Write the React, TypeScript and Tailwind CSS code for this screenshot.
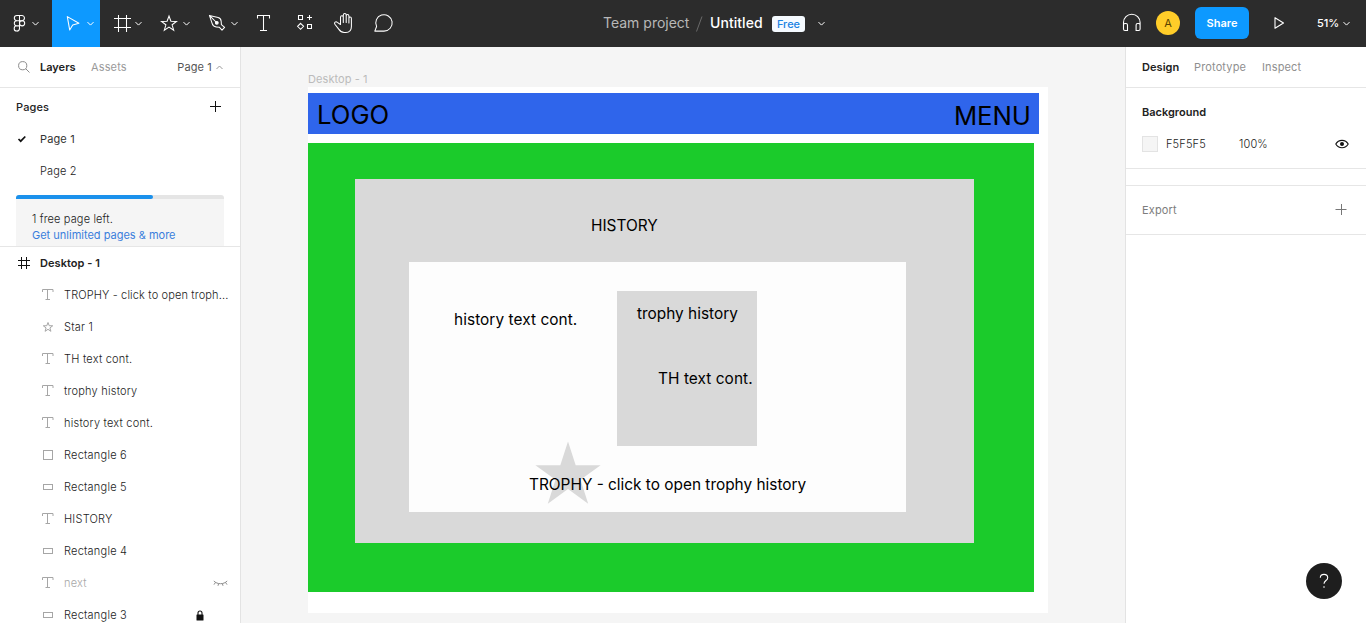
import React from "react";

const FONT = "font-['Inter','Liberation_Sans',sans-serif]";

function Chevron({ className = "" }: { className?: string }) {
  return (
    <svg width="7" height="5" viewBox="0 0 7 5" fill="none" stroke="currentColor" className={className}>
      <path d="M.5 1.100l3 3 3-3" />
    </svg>
  );
}

function Tool({
  children,
  className = "w-12",
  chevron = "",
}: {
  children: React.ReactNode;
  className?: string;
  chevron?: string;
}) {
  return (
    <button className={`flex h-full shrink-0 items-center ${className}`}>
      <svg width="30" height="47" viewBox="0 0 30 47" fill="none" stroke="currentColor" strokeWidth="1.05" className="shrink-0 overflow-visible">
        {children}
      </svg>
      {chevron && <Chevron className={`shrink-0 ${chevron}`} />}
    </button>
  );
}

function Toolbar() {
  return (
    <header className="flex h-[47px] shrink-0 items-center bg-[#2c2c2c] text-white">
      <div className="flex h-full w-[602px] shrink-0">
        <Tool className="w-[52px]" chevron="ml-[2px]">
          <path d="M19.5 15.5v13a2.65 2.65 0 1 1-2.6-2.7h2.6M19.5 15.5h-2.6a2.6 2.6 0 0 0 0 5.2h5a2.6 2.6 0 0 0 0-5.2zM19.5 20.7h-2.6a2.6 2.6 0 0 0 0 5.2h2.6" />
          <circle cx="22.1" cy="23.3" r="2.6" />
        </Tool>
        <Tool className="w-12 bg-[#0d99ff]" chevron="ml-[5px]">
          <path d="M15.3 16.6l11.6 6.6-6.2 1.9-3 4.9z" strokeLinejoin="round" />
        </Tool>
        <Tool chevron="ml-[5px]">
          <path d="M18.5 15v17M26.5 15v17M14 18.5h17M14 27.5h17" />
        </Tool>
        <Tool chevron="ml-[5px]">
          <path d="M21 16l1.9 5.2 5.6.2-4.4 3.4 1.6 5.4-4.7-3.1-4.7 3.1 1.6-5.4-4.4-3.4 5.6-.2z" />
        </Tool>
        <Tool chevron="ml-[5px]">
          <path d="M13.4 15.4l8.7 2.1c2 .5 3 2 3.1 4l.2 3.1 3.2 2.8-2.6 2.7-2.8-2.9-3-.3c-2-.2-3.5-1.3-4-3.2zM13.4 15.4l6.6 6.6" strokeLinejoin="round" />
          <circle cx="20.8" cy="22.8" r="1.4" fill="currentColor" />
        </Tool>
        <Tool className="w-10">
          <path d="M13.5 18.5v-3h12v3M19.5 15.5v15M16 30.5h7" />
        </Tool>
        <Tool className="w-10">
          <path d="M14.5 15.5h4v4h-4zM23.5 24.5h4v4h-4zM25.5 15v5M23 17.5h5M16.6 23.3l3 3-3 3-3-3z" />
        </Tool>
        <Tool className="w-10">
          <path d="M16.5 24.5v-7.3c0-2 2.8-2 2.8 0v5.3-7.300c0-2.200 2.900-2.200 2.900 0v7.300-6.600c0-2 2.700-2 2.700 0v7-4.500c0-2 2.500-2 2.500 0v8c0 3.800-2.400 6-5.600 6h-1.600c-2.500 0-4-1-5.300-3l-4-5.200c-1.200-1.700.9-3.200 2.400-1.800z" strokeLinejoin="round" />
        </Tool>
        <Tool className="w-10">
          <path d="M10.800 31.100h9.200a8.200 8.200 0 1 0-7.400-4.600z" strokeLinejoin="round" />
        </Tool>
      </div>

      <div className="flex flex-1 items-center text-[14px] leading-4">
        <span className="mb-px w-[87px] whitespace-nowrap pl-px text-[#b8b8b8]">Team project</span>
        <svg width="8" height="18" viewBox="0 0 8 18" stroke="#6a6a6a" className="ml-[6px]">
          <path d="M7 1.500L1.500 16.500" />
        </svg>
        <span className="mb-px ml-[7px] w-[54px] whitespace-nowrap font-medium tracking-[0.05px]">Untitled</span>
        <span className="ml-2 flex h-4 w-[33px] items-center justify-center rounded-[3px] bg-[#f5faff] text-[11px] font-medium text-[#1a82e2]">
          Free
        </span>
        <Chevron className="ml-[13px]" />
      </div>

      <div className="flex h-full w-[246px] shrink-0 items-center">
        <svg width="24" height="47" viewBox="0 0 24 47" fill="none" stroke="currentColor" strokeWidth="1.100">
          <path d="M3.500 26v-3.500a8.300 8.300 0 0 1 16.600 0V26M3.500 25a1.500 1.500 0 0 1 1.500-1.500h1a1.500 1.500 0 0 1 1.500 1.500v5.500H5A1.500 1.500 0 0 1 3.500 29zM20.100 25a1.500 1.500 0 0 0-1.500-1.500h-1a1.500 1.500 0 0 0-1.500 1.500v5.500h2.500a1.500 1.500 0 0 0 1.500-1.500z" />
        </svg>
        <span className="mb-px ml-3 flex size-6 items-center justify-center rounded-full bg-[#ffcd29] text-[11px] text-[#5a4300]">
          A
        </span>
        <button className="mb-px ml-[15px] flex h-8 w-[54px] items-center justify-center rounded-[6px] bg-[#0d99ff] text-[11px] font-semibold">
          Share
        </button>
        <svg width="12" height="14" viewBox="0 0 12 14" fill="none" stroke="currentColor" strokeWidth="1.100" className="mb-px ml-[25px]">
          <path d="M1 1.700v10.600l8.500-5.300z" strokeLinejoin="round" />
        </svg>
        <span className="ml-[31px] w-[21px] whitespace-nowrap text-[11px] font-medium">51%</span>
        <Chevron className="ml-[5px]" />
      </div>
    </header>
  );
}

function TextIcon() {
  return (
    <svg width="12" height="12" viewBox="0 0 12 12" fill="none" stroke="#a6a6a6">
      <path d="M.5 3V.5h10.500V3M5.500 .5v10M3.500 10.500h4.500" />
    </svg>
  );
}

function StarIcon() {
  return (
    <svg width="12" height="12" viewBox="0 0 12 12" fill="none" stroke="#a6a6a6">
      <path d="M6 1.500l1.200 3.200 3.500.1-2.800 2.100 1 3.400L6 8.300l-2.900 2 1-3.400-2.800-2.100 3.500-.1z" />
    </svg>
  );
}

function RectIcon({ tall = false }: { tall?: boolean }) {
  return (
    <svg width="12" height="12" viewBox="0 0 12 12" fill="none" stroke="#a6a6a6">
      {tall ? <rect x="1.500" y="1.500" width="9" height="9" /> : <rect x="1.500" y="3.500" width="9" height="5" />}
    </svg>
  );
}

type Layer = { name: string; kind: "text" | "star" | "rect" | "square"; state?: "hidden" | "locked" };

const layers: Layer[] = [
  { name: "TROPHY - click to open troph...", kind: "text" },
  { name: "Star 1", kind: "star" },
  { name: "TH text cont.", kind: "text" },
  { name: "trophy history", kind: "text" },
  { name: "history text cont.", kind: "text" },
  { name: "Rectangle 6", kind: "square" },
  { name: "Rectangle 5", kind: "rect" },
  { name: "HISTORY", kind: "text" },
  { name: "Rectangle 4", kind: "rect" },
  { name: "next", kind: "text", state: "hidden" },
  { name: "Rectangle 3", kind: "rect", state: "locked" },
];

function LayerRow({ name, kind, state }: Layer) {
  const tracking = name.length > 20 ? "tracking-[0.14px]" : "tracking-[0.22px]";
  return (
    <li className="flex h-8 shrink-0 items-center pl-[42px]">
      {kind === "text" && <TextIcon />}
      {kind === "star" && <StarIcon />}
      {kind === "rect" && <RectIcon />}
      {kind === "square" && <RectIcon tall />}
      <span className={`ml-[10px] whitespace-nowrap font-light ${tracking} ${state === "hidden" ? "text-[#a8a8a8]" : "text-[#1c1c1c]"}`}>
        {name}
      </span>
      {state === "hidden" && (
        <svg width="15" height="6" viewBox="0 0 15 6" fill="none" stroke="#8c8c8c" className="ml-auto mr-[12px]">
          <path d="M.8 1c3.500 3.600 9.900 3.600 13.400 0M2.600 2.300L1 4.600M5.600 3.700L5 5.800M9.400 3.700l.6 2.100M12.400 2.300L14 4.600" />
        </svg>
      )}
      {state === "locked" && (
        <svg width="8" height="11" viewBox="0 0 8 11" className="ml-auto mr-[36.5px]">
          <rect x=".5" y="4.500" width="7" height="6" rx=".5" fill="#111" />
          <path d="M2 5V3a2 2 0 0 1 4 0v2" fill="none" stroke="#111" strokeWidth="1.100" />
        </svg>
      )}
    </li>
  );
}

function LeftPanel() {
  return (
    <aside className="flex w-[241px] shrink-0 flex-col overflow-hidden border-r border-[#e3e3e3] bg-white text-[11px] leading-4 tracking-[0.14px] text-[#222]">
      <div className="flex h-[41px] shrink-0 items-center border-b border-[#e6e6e6] pl-[18px] pr-[17px]">
        <svg width="12" height="12" viewBox="0 0 12 12" fill="none" stroke="#8c8c8c">
          <circle cx="4.700" cy="4.700" r="4.100" />
          <path d="M7.700 7.700l3.800 3.800" />
        </svg>
        <span className="ml-[10px] w-[51px] whitespace-nowrap font-semibold tracking-[0px] text-[#222]">Layers</span>
        <span className="whitespace-nowrap text-[#9a9a9a]">Assets</span>
        <span className="ml-auto whitespace-nowrap text-[#555]">Page 1</span>
        <svg width="7" height="5" viewBox="0 0 7 5" fill="none" stroke="#999" className="ml-1">
          <path d="M.5 4l3-3 3 3" />
        </svg>
      </div>

      <section className="flex h-[159px] shrink-0 flex-col overflow-hidden border-b border-[#e6e6e6] pt-[3px]">
        <div className="flex h-8 shrink-0 items-center justify-between pl-4 pr-[18px]">
          <span className="font-medium">Pages</span>
          <svg width="13" height="12" viewBox="0 0 13 12" stroke="#111" fill="none">
            <path d="M1 5.500h11M6.500 0v11" />
          </svg>
        </div>
        <div className="flex h-8 shrink-0 items-center pl-[17px]">
          <svg width="10" height="8" viewBox="0 0 10 8" fill="none" stroke="#111" strokeWidth="1.700">
            <path d="M1.500 4l2.200 2.200L8.300 1.500" />
          </svg>
          <span className="ml-[13px] text-[#333]">Page 1</span>
        </div>
        <div className="flex h-8 shrink-0 items-center pl-10 font-light">Page 2</div>
        <div className="mx-4 mt-2 h-1 shrink-0 overflow-hidden rounded-t-[3px] bg-[#e5e5e5]">
          <div className="h-full w-[137px] rounded-r-[2px] bg-[#1b91ec]" />
        </div>
        <div className="mx-4 flex-1 bg-[#f5f5f5] pl-4 pt-3">
          <p className="font-light">1 free page left.</p>
          <p className="whitespace-nowrap tracking-[0px] text-[#3a7edc]">Get unlimited pages &amp; more</p>
        </div>
      </section>

      <div className="flex h-8 shrink-0 items-center pl-[18px]">
        <svg width="12" height="12" viewBox="0 0 12 12" fill="none" stroke="#111">
          <path d="M3.500 0v12M8.500 0v12M0 3.500h12M0 8.500h12" />
        </svg>
        <span className="ml-[10px] font-semibold tracking-[0.05px] text-[#222]">Desktop - 1</span>
      </div>
      <ul className="flex flex-col">
        {layers.map((layer) => (
          <LayerRow key={layer.name} {...layer} />
        ))}
      </ul>
    </aside>
  );
}

function Canvas() {
  const label = "absolute whitespace-nowrap text-[15.4px] leading-5 text-black";
  return (
    <main className="relative flex-1 overflow-hidden bg-[#f5f5f5]">
      <span className="absolute left-[67px] top-[24px] whitespace-nowrap text-[11px] leading-4 tracking-[0.08px] text-[#bbb]">
        Desktop - 1
      </span>
      <div className="absolute left-[67px] top-[40px] h-[526px] w-[740px] bg-white">
        <div className="absolute left-0 top-[6px] h-[41px] w-[731px] bg-[#2f65eb]" />
        <span className="absolute left-[9px] top-[12px] whitespace-nowrap text-[25.700px] leading-8 text-black">LOGO</span>
        <span className="absolute left-[646px] top-[13px] whitespace-nowrap text-[25.700px] leading-8 tracking-[-0.1px] text-black">MENU</span>
        <div className="absolute left-0 top-[56px] h-[449px] w-[726px] bg-[#1bcb2b]" />
        <div className="absolute left-[47px] top-[92px] h-[364px] w-[619px] bg-[#d9d9d9]" />
        <span className={`${label} left-[283px] top-[129px]`}>HISTORY</span>
        <div className="absolute left-[101px] top-[175px] h-[250px] w-[497px] bg-[#fdfdfd]" />
        <div className="absolute left-[309px] top-[204px] h-[155px] w-[140px] bg-[#d9d9d9]" />
        <span className={`${label} left-[146px] top-[223px] tracking-[0.06px]`}>history text cont.</span>
        <span className={`${label} left-[329px] top-[217px]`}>trophy history</span>
        <span className={`${label} left-[350px] top-[282px] tracking-[0.06px]`}>TH text cont.</span>
        <svg width="66" height="64" viewBox="0 0 66 64" className="absolute left-[227px] top-[354px]" fill="#d9d9d9">
          <path d="M33 .5l7.700 23.700h24.900L45.500 38.800l7.700 24L33 48.100 12.800 62.800l7.700-24L.4 24.200h24.900z" />
        </svg>
        <span className={`${label} left-[221px] top-[388px]`}>TROPHY - click to open trophy history</span>
      </div>
    </main>
  );
}

function RightPanel() {
  return (
    <aside className="flex w-[241px] shrink-0 flex-col border-l border-[#e3e3e3] bg-white text-[11px] leading-4 tracking-[0.14px] text-[#222]">
      <div className="flex h-[41px] shrink-0 items-center border-b border-[#e6e6e6] pl-4 text-[#8f8f8f]">
        <span className="w-[52px] font-semibold tracking-[0.05px] text-[#222]">Design</span>
        <span className="w-[68px]">Prototype</span>
        <span>Inspect</span>
      </div>
      <section className="flex h-[81px] shrink-0 flex-col border-b border-[#e6e6e6] py-2 pl-4 pr-[17px]">
        <div className="flex h-8 items-center font-semibold tracking-[0px]">Background</div>
        <div className="flex h-8 items-center">
          <span className="size-4 border border-[#e3e3e3] bg-[#f5f5f5]" />
          <span className="ml-2 w-[73px] font-light">F5F5F5</span>
          <span className="font-light">100%</span>
          <svg width="14" height="10" viewBox="0 0 14 10" fill="none" stroke="#111" strokeWidth="1.100" className="ml-auto">
            <path d="M.8 5C3.500 .1 10.500 .1 13.200 5 10.500 9.900 3.500 9.900 .8 5z" />
            <circle cx="7" cy="5" r="2" fill="#111" stroke="none" />
          </svg>
        </div>
      </section>
      <div className="h-4 shrink-0" />
      <section className="flex h-[50px] shrink-0 items-center justify-between border-y border-[#e6e6e6] pl-4 pr-[19px] text-[#7d7d7d]">
        <span>Export</span>
        <svg width="12" height="12" viewBox="0 0 12 12" stroke="#777" fill="none">
          <path d="M.5 5.500h11M6.500 0v11" />
        </svg>
      </section>
      <button className="mb-6 ml-auto mr-6 mt-auto flex size-9 items-center justify-center rounded-full bg-[#1e1e1e]">
        <svg width="10" height="16" viewBox="0 0 10 16" fill="none" stroke="#fff" strokeWidth="1.100">
          <path d="M1.300 4.700C1.300 .2 8.700 .2 8.700 4.700 8.700 7.600 5 7.500 5 10.800" />
          <circle cx="5" cy="14" r=".8" fill="#fff" stroke="none" />
        </svg>
      </button>
    </aside>
  );
}

export default function App() {
  return (
    <div className={`flex h-[623px] w-[1366px] flex-col overflow-hidden ${FONT}`}>
      <Toolbar />
      <div className="flex min-h-0 flex-1">
        <LeftPanel />
        <Canvas />
        <RightPanel />
      </div>
    </div>
  );
}
